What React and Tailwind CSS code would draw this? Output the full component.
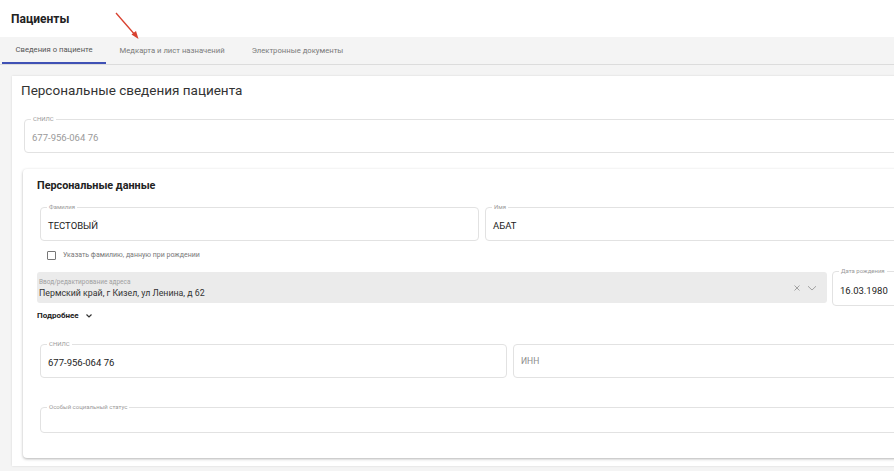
import React from "react";

const font = { fontFamily: "Roboto, 'Noto Sans', sans-serif" };

function Outlined({ label, children, className = "", bodyClass = "h-[29px]" }) {
  return (
    <fieldset className={`border border-[#e2e2e2] rounded-[4px] px-[6px] pb-0 m-0 min-w-0 ${className}`}>
      {label && (
        <legend className="px-[2px] text-[6px] leading-[8px] text-[#9a9a9a]">{label}</legend>
      )}
      <div className={`flex items-center px-[1px] pt-[2px] ${bodyClass}`}>{children}</div>
    </fieldset>
  );
}

export default function App() {
  const tabs = ["Сведения о пациенте", "Медкарта и лист назначений", "Электронные документы"];

  return (
    <div className="relative w-[894px] h-[471px] overflow-hidden bg-[#f4f4f4] text-[#333]" style={font}>
      {/* header */}
      <div className="h-[37px] bg-white flex items-center px-[11px]">
        <h1 className="text-[12px] font-bold text-[#222]">Пациенты</h1>
      </div>

      {/* tabs */}
      <div className="h-[28px] flex pl-[2px] border-b border-[#dcdcdc]">
        {tabs.map((t, i) => (
          <div
            key={t}
            className={
              i === 0
                ? "px-[13.5px] flex items-center text-[7.7px] text-[#555] border-b-2 border-[#3f51b5]"
                : "px-[13.5px] flex items-center text-[7.7px] text-[#7a7a7a]"
            }
          >
            {t}
          </div>
        ))}
      </div>

      {/* main card */}
      <div className="ml-[12px] mt-[11px] w-[930px] bg-white shadow-[0_0_2px_rgba(0,0,0,0.12)] pt-[4px] pb-[8px]">
        <h2 className="ml-[9px] text-[13.5px] leading-[21px] text-[#333]">Персональные сведения пациента</h2>

        <Outlined label="СНИЛС" className="ml-[12px] mt-[14px]">
          <span className="text-[9.5px] text-[#9a9a9a]">677-956-064 76</span>
        </Outlined>

        {/* inner card */}
        <div className="ml-[11px] mr-[11px] mt-[16px] bg-white rounded-[4px] shadow-[0_1px_3px_rgba(0,0,0,0.3)] pl-[14px] pr-[14px] pt-[10px] pb-[25px]">
          <h3 className="text-[10.8px] leading-[14px] font-bold text-[#222]">Персональные данные</h3>

          <div className="flex gap-[6px] ml-[3px] mt-[10px]">
            <Outlined label="Фамилия" className="w-[439px]">
              <span className="text-[9.5px] text-[#222]">ТЕСТОВЫЙ</span>
            </Outlined>
            <Outlined label="Имя" className="flex-1">
              <span className="text-[9.5px] text-[#222]">АБАТ</span>
            </Outlined>
          </div>

          <div className="flex items-center h-[12px] mt-[8px] ml-[10px]">
            <span className="w-[9px] h-[9px] border border-[#777] rounded-[1px]" />
            <span className="ml-[7px] text-[7px] text-[#777]">Указать фамилию, данную при рождении</span>
          </div>

          <div className="flex items-start gap-[5px] mt-[6px]">
            <div className="mt-[5px] w-[790px] h-[31px] bg-[#ebebeb] rounded-[3px] flex items-center pl-[2px] pr-[10px]">
              <div className="flex-1 flex flex-col">
                <span className="text-[6.5px] leading-[10px] text-[#a0a0a0]">Ввод/редактирование адреса</span>
                <span className="text-[8.8px] leading-[12px] text-[#333]">Пермский край, г Кизел, ул Ленина, д 62</span>
              </div>
              <svg width="8" height="8" viewBox="0 0 8 8" className="mr-[6px]">
                <path d="M1.5 1.5 L6.5 6.5 M6.5 1.5 L1.5 6.5" stroke="#999" strokeWidth="0.9" />
              </svg>
              <svg width="10" height="8" viewBox="0 0 10 8">
                <path d="M1 2.2 L5 6 L9 2.2" stroke="#999" strokeWidth="0.9" fill="none" />
              </svg>
            </div>
            <Outlined label="Дата рождения" className="flex-1" bodyClass="h-[30px]">
              <span className="text-[9.5px] text-[#222]">16.03.1980</span>
            </Outlined>
          </div>

          <div className="flex items-center h-[12px] mt-[4px]">
            <span className="text-[8px] font-bold text-[#222]">Подробнее</span>
            <svg width="8" height="6" viewBox="0 0 8 6" className="ml-[6px]">
              <path d="M1.5 1.5 L4 4 L6.5 1.5" stroke="#333" strokeWidth="1.2" fill="none" />
            </svg>
          </div>

          <div className="flex items-end gap-[6px] ml-[3px] mt-[18px]">
            <Outlined label="СНИЛС" className="w-[467px]">
              <span className="text-[9.5px] text-[#222]">677-956-064 76</span>
            </Outlined>
            <div className="flex-1 h-[34px] border border-[#e2e2e2] rounded-[4px] flex items-center px-[7px]">
              <span className="text-[8.5px] text-[#8a8a8a]">ИНН</span>
            </div>
          </div>

          <Outlined label="Особый социальный статус" className="ml-[3px] mt-[25px]" bodyClass="h-[21px]">
            <span />
          </Outlined>
        </div>
      </div>

      {/* annotation arrow */}
      <svg className="absolute left-[110px] top-[8px]" width="36" height="36" viewBox="0 0 36 36">
        <path d="M6 5 L26 28" stroke="#d8412f" strokeWidth="1.3" />
        <path d="M28.5 31 L21.5 26.5 L26 23 Z" fill="#d8412f" />
      </svg>
    </div>
  );
}
